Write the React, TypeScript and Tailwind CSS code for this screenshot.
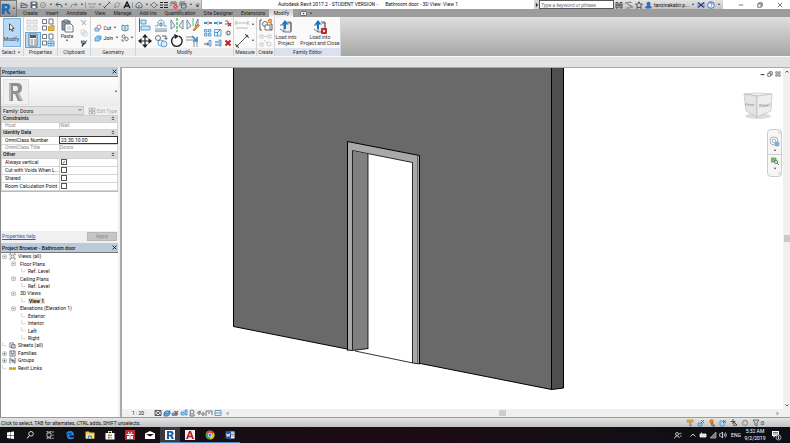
import type { ReactNode } from 'react';
import { useState } from 'react';

interface IconProps {
  children: ReactNode;
  className?: string;
  box?: string;
}

// Every ribbon icon is drawn on a small pixel grid
function Ico({ children, className = 'w-2 h-2', box = '0 0 8 8' }: IconProps) {
  return (
    <svg viewBox={box} className={`block shrink-0 ${className}`} fill="none" stroke="#4b5563" strokeWidth="0.8" aria-hidden="true">
      {children}
    </svg>
  );
}

function Big({ children }: { children: ReactNode }) {
  return <Ico box="0 0 14 14" className="w-[14px] h-[14px]">{children}</Ico>;
}

function Caret() {
  return (
    <svg viewBox="0 0 4 3" className="block w-1 h-[3px] shrink-0" aria-hidden="true">
      <path d="M.7.700h2.600L2 2.300z" fill="#333" />
    </svg>
  );
}

function Tool({ label, children, className = '' }: { label: string; children: ReactNode; className?: string }) {
  return (
    <button type="button" aria-label={label} className={`flex items-center justify-center ${className}`}>
      {children}
    </button>
  );
}

function Group({ title, children, className = '', footer = 'bg-[#ececec]' }: { title: ReactNode; children: ReactNode; className?: string; footer?: string }) {
  return (
    <section className={`flex flex-col shrink-0 border-r border-[#d4d4d4] bg-[#fafafa] overflow-hidden ${className}`}>
      <div className="flex-1 flex items-center justify-center">{children}</div>
      <div className={`h-2 leading-2 text-center whitespace-nowrap text-[#333] ${footer}`}>{title}</div>
    </section>
  );
}

const tabs = ['Create', 'Insert', 'Annotate', 'View', 'Manage', 'Add-Ins', 'Quantification', 'Site Designer', 'Extensions'];

const blue = '#3d8fce';

function QuickAccess() {
  return (
    <div className="w-[185px] shrink-0 flex items-center justify-between pl-[3px] pr-px bg-linear-to-b from-[#dcdcdc] to-[#bdbdbd] border-r border-[#aaa]">
      <Tool label="Open"><Ico><path d="M1 6.500V2h2l1 1h2v1M1 6.500l1-2.500h5.500l-1 2.500z" /></Ico></Tool>
      <Tool label="Save"><Ico><path d="M1 1h5.500l.5.500v5.500H1z" fill="#69727c" /><path d="M2.500 1.500h3v1.500h-3zM2.500 5h3v2h-3z" fill="#fff" stroke="none" /></Ico></Tool>
      <Tool label="Synchronize"><Ico><circle cx="4" cy="4" r="2.600" stroke="#888" /><path d="M2.500 5l3-2" stroke="#888" /></Ico></Tool>
      <Caret />
      <Tool label="Undo"><Ico><path d="M3 1.500L1 3.500l2 2M1 3.500h4q2 0 2 3" strokeWidth="1" /></Ico></Tool>
      <Caret />
      <Tool label="Redo"><Ico><path d="M5 1.500l2 2-2 2M7 3.500H3q-2 0-2 3" stroke="#777" /></Ico></Tool>
      <Caret />
      <span className="w-px h-1.5 bg-[#999]" />
      <Tool label="Measure"><Ico><path d="M1 2v2M7 2v2M1 3h6M1 6h6" stroke="#888" /></Ico></Tool>
      <Caret />
      <Tool label="Aligned dimension"><Ico><path d="M1 7l6-6M.500 5.500L2.500 7.500M5.500.500l2 2" stroke="#333" /></Ico></Tool>
      <Tool label="Tag"><Ico><path d="M2 6V3l2-1.500 3 1L5 6zM1 7l2-2" stroke="#888" /></Ico></Tool>
      <Tool label="Text"><Ico><path d="M1 7.300L4 1l3 6.300M2.300 5h3.500" stroke="#111" strokeWidth="1.300" /></Ico></Tool>
      <span className="w-px h-1.5 bg-[#999]" />
      <Tool label="3D view"><Ico><path d="M1 3.500L4 1l3 2.500v3L4 7 1 6.500zM4 4v3" /></Ico></Tool>
      <Caret />
      <Tool label="Section"><Ico><path d="M4 1l3 3-3 3-3-3zM0 4h1M7 4h1" stroke="#666" /></Ico></Tool>
      <Tool label="Thin lines"><Ico><path d="M0 1.500h3M4 1.500h4M0 4h3M4 4h4M0 6.500h3M4 6.500h4" stroke="#222" strokeWidth="1" /></Ico></Tool>
      <Tool label="Close hidden windows"><Ico><path d="M1 5V1h5v3M2 2.500h3" /><circle cx="5.500" cy="5.500" r="2.200" fill="#d33" stroke="none" /><path d="M4.600 4.600l1.800 1.800M6.400 4.600L4.600 6.400" stroke="#fff" /></Ico></Tool>
      <Tool label="Switch windows"><Ico><path d="M1 5V1h5M2.500 2.500H7V7H2.500zM2.500 4H7" /></Ico></Tool>
      <Caret />
      <Tool label="Customize"><Ico className="w-[5px] h-2"><path d="M1 2.500h6M2 5h4L4 7z" fill="#222" stroke="#222" /></Ico></Tool>
    </div>
  );
}

function TitleBar() {
  return (
    <div className="h-[9px] flex">
      <QuickAccess />
      <h1 className="flex-1 text-center whitespace-pre leading-2">{'Autodesk Revit 2017.2 - STUDENT VERSION -      Bathroom door - 3D View: View 1'}</h1>
      <Tool label="Collapse search" className="w-[5px] bg-[#d5d5d5]"><Ico className="w-1 h-1"><path d="M2 0l4 4-4 4z" fill="#222" /></Ico></Tool>
      <input aria-label="Search" placeholder="Type a keyword or phrase" className="w-[75px] h-[9px] px-px bg-white border border-[#555] italic placeholder:text-[#666] outline-none" />
      <div className="w-[109px] flex items-center justify-between pl-px pr-0.5 bg-linear-to-b from-[#e4e4e4] to-[#c4c4c4]">
        <Tool label="Find"><Ico><path d="M1 4V1.500h2V7H1V4h6v3H5V1.500h2V4" stroke="#333" /></Ico></Tool>
        <Tool label="Subscription"><Ico><path d="M6.500 1.500q-5-1-4 1t3 2-1 2.500l-3 0M1 1v2M7 5v2" /></Ico></Tool>
        <Tool label="Favorites"><Ico><path d="M4 .700l1 2.300 2.500.200-1.900 1.700.6 2.500L4 6.100 1.800 7.400l.6-2.500L.5 3.200 3 3z" stroke="#333" /></Ico></Tool>
        <button type="button" className="flex items-center gap-0.5">
          <Ico className="w-[7px] h-2"><circle cx="4" cy="2.500" r="1.800" fill="#2577d0" stroke="#1c5ca6" /><path d="M1 7.500V6l2-1.500h2L7 6v1.500z" fill="#2577d0" stroke="#1c5ca6" /></Ico>
          <span>tanzinakabir.p...</span>
          <Caret />
        </button>
        <Tool label="Exchange apps"><Ico><path d="M1 1.500l6 5M7 1.500L1 6.500" stroke="#243a7d" strokeWidth="1.300" /><path d="M1 1.500v5M7 1.500v5" stroke="#4f80c4" /></Ico></Tool>
        <Tool label="Help"><Ico><circle cx="4" cy="4" r="3.300" stroke="#245ba9" fill="#fff" /><path d="M2.800 3q0-1.200 1.200-1.200T5.200 3 4 4.500M4 5.300v1" stroke="#245ba9" /></Ico></Tool>
        <Caret />
      </div>
      <div className="w-[67px] flex items-center justify-around pl-2">
        <Tool label="Minimize"><Ico className="w-1.5 h-1.5"><path d="M1 4h6" stroke="#222" /></Ico></Tool>
        <Tool label="Restore"><Ico className="w-1.5 h-1.5"><path d="M1 2.500h4.500V7H1zM2.500 2.500V1H7v4.500H5.500" stroke="#222" /></Ico></Tool>
        <Tool label="Close"><Ico className="w-1.5 h-1.5"><path d="M1 1l6 6M7 1L1 7" stroke="#222" /></Ico></Tool>
      </div>
    </div>
  );
}

function TabBar() {
  return (
    <nav className="h-2 flex items-stretch bg-[#9c9c9c] pl-1.5 gap-2 leading-[9px]">
      {tabs.map((tab) => (
        <button key={tab} type="button" className="whitespace-nowrap text-[#1c1c1c]">{tab}</button>
      ))}
      <button type="button" className="w-6 -ml-1 -mr-px bg-linear-to-b from-[#c8c8c8] to-[#f1f1f1]">Modify</button>
      <button type="button" aria-label="Ribbon display" className="flex items-center gap-0.5">
        <Ico className="w-[7px] h-[5px]" box="0 0 7 5"><rect x=".5" y=".5" width="6" height="4" rx="1" fill="#eee" /><circle cx="3.500" cy="2.500" r=".8" fill="#444" stroke="none" /></Ico>
        <Caret />
      </button>
    </nav>
  );
}

function Ribbon() {
  return (
    <div className="h-[39px] flex bg-linear-to-b from-[#dfdfdf] to-[#a6a6a6]">
      <Group className="w-6" title={<span className="inline-flex items-center gap-0.5">Select <Caret /></span>}>
        <button type="button" className="w-[18px] h-[29px] flex flex-col items-center justify-center gap-1 bg-[#b9d9f4] border border-[#7eb0dc] text-[#333]">
          <Ico className="w-[7px] h-[9px]" box="0 0 7 9"><path d="M1.500.800v6.400L3 5.800l1 2.500 1.200-.5-1-2.400h2z" fill="#fff" stroke="#333" /></Ico>
          Modify
        </button>
      </Group>

      <Group className="w-[34px]" title="Properties">
        <div className="grid grid-cols-2 gap-px">
          <Tool label="Family category"><Big><path d="M1 2h4v4H1zM7 2h4v4H7zM1 8h4v4H1zM7 8h4v4H7z" fill="#eee" stroke="#c6c6c6" /></Big></Tool>
          <Tool label="Type properties"><Big><path d="M1.500 1.500h4v4h-4zM8 1h4v5H8zM1.500 8h4v4h-4z" fill="#fff" /><path d="M7.500 8.500h2l.5-1h3v5h-5.500z" fill="#e9b83c" stroke="#c08b1a" /></Big></Tool>
          <Tool label="Properties" className="bg-[#b9d9f4] outline outline-[#69a4d8]"><Big><path d="M3 1h8v12H3z" fill="#fff" /><path d="M4 2h6v3H4z" fill="#44606f" stroke="none" /><path d="M4.500 7H7M4.500 9H7M4.500 11H7M8 7h2M8 9h2M8 11h2" /></Big></Tool>
          <Tool label="Family types"><Big><path d="M1.500 1.500h4v4h-4zM8 1h4v5H8zM1.500 8h4v4h-4z" fill="#fff" /><path d="M7 8h6v5H7zM10 8v5M7 10.500h6" fill="#d8ecfb" stroke={blue} /></Big></Tool>
        </div>
      </Group>

      <Group className="w-[33px]" title="Clipboard">
        <div className="flex gap-1.5">
          <button type="button" className="flex flex-col items-center text-[#333]">
            <Big><path d="M2 2h8v9H2z" fill="#8b98a3" /><path d="M4 1h4v2H4z" fill="#c9ced3" /><path d="M5 5h6l2 2v6H5z" fill="#fff" /><path d="M7 8h4M7 10h4" stroke="#aaa" /></Big>
            Paste
            <Caret />
          </button>
          <div className="flex flex-col gap-0.5">
            <Tool label="Cut to clipboard"><Ico><path d="M1 1l5 5M6 1L2 6" stroke="#bbb" strokeWidth="1.200" /></Ico></Tool>
            <Tool label="Copy to clipboard"><Ico><path d="M1 1h4v4H1zM3 3h4v4H3z" fill="#fff" stroke="#c8c8c8" /></Ico></Tool>
            <Tool label="Match type"><Ico><path d="M1 2h3l2 1-1 2H2zM7 1L4 5" fill="#9aa4ad" /><path d="M4 4L2 7.500" stroke="#333" strokeWidth="1.500" /></Ico></Tool>
          </div>
        </div>
      </Group>

      <Group className="w-[45px]" title="Geometry">
        <div className="grid grid-cols-[26px_12px] gap-y-0.5 gap-x-px items-center">
          <button type="button" className="flex items-center gap-0.5"><Ico><path d="M1 4h4v3H1z" fill="#bdddf4" stroke={blue} /><circle cx="5" cy="3" r="2" fill="#fff" stroke="#d05c45" /></Ico>Cut <Caret /></button>
          <Tool label="Cope" className="justify-start"><Ico><path d="M1 1l3 1v5L1 6zM4 2l3-1v5L4 7" fill="#d4e9f6" stroke="#4c7895" /></Ico></Tool>
          <button type="button" className="flex items-center gap-0.5"><Ico><path d="M1 4l2-2h4v3L5 7H1z" fill="#9fcff2" stroke={blue} /><path d="M3 4h3v2" stroke={blue} /></Ico>Join <Caret /></button>
          <Tool label="Paint" className="justify-start gap-px"><Ico><circle cx="2.500" cy="2.500" r="1.500" /><circle cx="5.500" cy="5" r="1.700" /><path d="M1 5v2h2" /></Ico><Caret /></Tool>
        </div>
      </Group>

      <Group className="w-[98px]" title="Modify">
        <div className="flex items-center gap-1">
          <div className="grid grid-cols-4 gap-x-0.5 gap-y-0.5">
            <Tool label="Align"><Big><path d="M1.500 0v14" stroke="#333" /><path d="M3 2h5v4H3zM3 8h9v4H3z" fill="#c9e4f8" stroke={blue} /></Big></Tool>
            <Tool label="Offset"><Big><path d="M1 11h12M1 8h3V4q3-4 6 0v4h3" stroke={blue} /><path d="M1 13h12M6 8V5h2v3z" /></Big></Tool>
            <Tool label="Mirror - Pick axis"><Big><path d="M1 2v9l4-3zM13 2v9L9 8z" fill="#e6f2fb" stroke="#5c7182" /><path d="M7 0v14" stroke="#36a453" strokeWidth="1.200" strokeDasharray="3 1" /></Big></Tool>
            <Tool label="Mirror - Draw axis"><Big><path d="M1 2v9l4-3zM12 1v6L9 8z" fill="#e6f2fb" stroke="#5c7182" /><path d="M7 0v8" stroke="#36a453" /><path d="M7 12l5-6 1.500 1.500L8 13z" fill="#e9a738" stroke="#a66a21" /></Big></Tool>
            <Tool label="Move"><Big><path d="M7 1v12M1 7h12" stroke="#222" strokeWidth="1.200" /><path d="M7 0l3 3.500H4zM7 14l3-3.500H4zM0 7l3.500-3v6zM14 7l-3.500-3v6z" fill="#222" stroke="none" /></Big></Tool>
            <Tool label="Copy"><Big><circle cx="4" cy="4" r="2.500" /><circle cx="7" cy="9" r="3" stroke={blue} /><circle cx="10" cy="10" r="3" stroke={blue} fill="#d5eafa" /><path d="M8 2h4v3M10.500 4L12 5.500 13.500 4" stroke="#333" /></Big></Tool>
            <Tool label="Rotate"><Big><path d="M9 2.200A5.300 5.300 0 1 1 4.500 2.300" stroke="#222" strokeWidth="1.400" /><path d="M4 0l5 2-4 3z" fill="#222" stroke="none" /></Big></Tool>
            <Tool label="Trim"><Big><path d="M0 3h8v3H0M8 6v7M11 3v10" stroke="#6b7680" /><path d="M6 2l5 5M11 3v4H7" stroke={blue} strokeWidth="1.500" /></Big></Tool>
          </div>
          <div className="grid grid-cols-3 gap-0.5">
            <Tool label="Split element"><Ico><path d="M0 4h3M5 4h3" stroke={blue} strokeWidth="2" /><path d="M4 2v4" stroke="#d95548" /></Ico></Tool>
            <Tool label="Split with gap"><Ico><path d="M0 4h3M5 4h3" stroke={blue} strokeWidth="2" /><path d="M3.500 2v4M5 2v4" stroke="#aaa" /></Ico></Tool>
            <Tool label="Unpin"><Ico><path d="M1 2h3v3H1" /><path d="M4 4l3 3M7 4L4 7" stroke="#cf2222" strokeWidth="1.300" /></Ico></Tool>
            <Tool label="Array"><Ico><path d="M.500.500h2.500v2.500H.5zM4.500.500H7v2.500H4.500zM.5 4.500H3V7H.5zM4.500 4.500H7V7H4.500z" fill="#cfe7f9" stroke={blue} /></Ico></Tool>
            <Tool label="Scale"><Ico><path d="M.500.500H7V7H.5zM.5 3.500h3V7" fill="#e3f1fb" stroke={blue} /><path d="M3 4l3-3" /></Ico></Tool>
            <Tool label="Pin"><Ico><path d="M1.500 4h1M3 2v4l3-.5v-3z" fill="#eee" /></Ico></Tool>
            <Tool label="Trim single"><Ico><path d="M0 5h4" stroke="#333" /><path d="M5 1.500h2v5.500H5z" fill="#cfe7f9" stroke={blue} /><path d="M3 3.500L4.500 5 3 6.500" stroke="#333" /></Ico></Tool>
            <Tool label="Trim multiple"><Ico><path d="M1 3h3M1 6h3" stroke="#333" /><path d="M5 1h2v6H5z" fill="#afd6f3" stroke={blue} /></Ico></Tool>
            <Tool label="Delete"><Ico><path d="M1.500 1.500l5 5M6.500 1.500l-5 5" stroke="#d11414" strokeWidth="1.800" /></Ico></Tool>
          </div>
        </div>
      </Group>

      <Group className="w-[23px]" title="Measure">
        <div className="flex flex-col gap-0.5">
          <button type="button" aria-label="Dimension" className="flex items-center gap-0.5"><Big><path d="M1 5h12M1 3v4M13 3v4M1 10h12" stroke="#bbb" strokeWidth="1.200" /></Big><Caret /></button>
          <button type="button" aria-label="Measure between" className="flex items-center gap-0.5"><Big><path d="M2 12L12 2M0 10l4 4M10 0l4 4" stroke="#333" /><circle cx="2" cy="12" r="1" fill="#333" /><circle cx="12" cy="2" r="1" fill="#333" /></Big><Caret /></button>
        </div>
      </Group>

      <Group className="w-[18px]" title="Create">
        <div className="flex flex-col gap-0.5">
          <Tool label="Create group"><Big><path d="M3 2H1v10h2M11 6h2v6h-2" stroke="#333" /><circle cx="6" cy="6" r="2.500" /><path d="M6 7h5v5H6z" fill="#fff" /><circle cx="11" cy="3" r="1.500" fill="#fff" stroke="#ee7d20" strokeWidth="1.400" /></Big></Tool>
          <Tool label="Create similar"><Big><path d="M1 1h3v3H1zM9 1h3v3H9zM5 2.500h3M5 6l3 3M1 9h3v3H1z" stroke="#bbb" /><circle cx="10" cy="10" r="2" stroke="#bbb" /></Big></Tool>
        </div>
      </Group>

      <Group className="w-[66px]" title="Family Editor" footer="bg-[#dce1f0]">
        <div className="flex items-start gap-1 text-[#333]">
          <button type="button" className="flex flex-col items-center whitespace-nowrap">
            <Big><path d="M1 5h4v7h7V2H8M5 12L1 9" fill="#eee" /><path d="M9 3h3v8" /><path d="M6 9V3" stroke="#1873c6" strokeWidth="2" /><path d="M2.500 4.500L6 0l3.500 4.500z" fill="#1873c6" stroke="none" /></Big>
            <span>Load into<br />Project</span>
          </button>
          <button type="button" className="flex flex-col items-center whitespace-nowrap">
            <Big><path d="M1 5h4v7h7V2H8M5 12L1 9" fill="#eee" /><path d="M9 3h3v5" /><path d="M5 9V3" stroke="#1873c6" strokeWidth="2" /><path d="M1.500 4.500L5 0l3.500 4.500z" fill="#1873c6" stroke="none" /><path d="M8.500 8.500h5v5h-5z" fill="#d62a2a" stroke="#a31919" /><path d="M10 10l2 2M12 10l-2 2" stroke="#fff" /></Big>
            <span>Load into<br />Project and Close</span>
          </button>
        </div>
      </Group>
    </div>
  );
}

function PanelHeader({ title }: { title: string }) {
  return (
    <header className="h-[9px] shrink-0 flex items-center justify-between px-px bg-[#bccbda]">
      <h2 className="font-medium">{title}</h2>
      <Tool label={`Close ${title}`} className="w-1.5"><Ico className="w-[5px] h-[5px]"><path d="M1 1l6 6M7 1L1 7" stroke="#111" strokeWidth="1.400" /></Ico></Tool>
    </header>
  );
}

function SectionRow({ title }: { title: string }) {
  return (
    <tr className="bg-[#dcdcdc]">
      <th colSpan={2} className="p-0 pl-px border border-[#d0d0d0] text-left font-medium">
        <span className="flex items-center justify-between pr-0.5">
          {title}
          <Ico className="w-1 h-[5px]" box="0 0 4 6"><path d="M.5 2.500L2 1l1.500 1.500M.5 5L2 3.500 3.500 5" stroke="#111" /></Ico>
        </span>
      </th>
    </tr>
  );
}

const cell = 'p-0 border border-[#d4d4d4] whitespace-nowrap text-left font-normal';

const toggles = [
  { id: 'vertical', label: 'Always vertical' },
  { id: 'voids', label: 'Cut with Voids When L...' },
  { id: 'shared', label: 'Shared' },
  { id: 'room', label: 'Room Calculation Point' },
];

function PropertiesPanel() {
  const [checked, setChecked] = useState<Record<string, boolean>>({ vertical: true });

  return (
    <section className="h-[174px] shrink-0 flex flex-col bg-white">
      <PanelHeader title="Properties" />
      <div className="h-[30px] shrink-0 flex items-center justify-between pl-0.5 border-t border-[#777] bg-linear-to-b from-[#fff] to-[#ebebeb]">
        <div className="w-[26px] h-[26px] bg-[#f0f0f0] border border-[#e2e2e2] flex items-center justify-center">
          <svg viewBox="0 0 18 20" className="w-[18px] h-5" aria-hidden="true">
            <path fillRule="evenodd" d="M2 1h8q5 0 5 5 0 4-3 5l4 8h-5l-3-7H6v7H2zM6 4v5h3q2 0 2-2.500T9 4z" fill="#8f8f8f" />
            <path d="M2 1l2 1v16l-2 1zM12 11l4 8-3-1-3-7z" fill="#bbb" />
          </svg>
        </div>
        <Tool label="Type selector" className="w-1"><Caret /></Tool>
      </div>
      <div className="h-[9px] shrink-0 flex items-center gap-1 pr-px bg-[#f0f0f0]">
        <div className="flex-1 relative h-[9px]">
          <select aria-label="Family" className="w-full h-[9px] pl-px appearance-none bg-[#e1e1e1] border border-[#c8c8c8] block">
            <option>Family: Doors</option>
          </select>
          <Ico className="absolute right-0.5 top-0.5 w-1 h-1"><path d="M1 2l3 3 3-3" stroke="#333" strokeWidth="1.400" /></Ico>
        </div>
        <button type="button" disabled className="flex items-center gap-px text-[#aaa] whitespace-nowrap">
          <Ico><path d="M1 1h2.500v2.500H1zM4.500 1H7v2.500H4.500zM1 4.500h2.500V7H1zM4.500 4.500H7V7H4.500z" stroke="#aaa" /></Ico>
          Edit Type
        </button>
      </div>
      <table className="w-full h-[76px] table-fixed border-collapse leading-[5px]">
        <tbody>
          <SectionRow title="Constraints" />
          <tr className="text-[#888]">
            <th className={`${cell} w-1/2 pl-[3px]`}>Host</th>
            <td className={`${cell} w-1/2`}>Wall</td>
          </tr>
          <SectionRow title="Identity Data" />
          <tr>
            <th className={`${cell} pl-[3px]`}><label htmlFor="omni">OmniClass Number</label></th>
            <td className={cell}><input id="omni" defaultValue="23.30.10.00" className="block w-full h-1.5 pl-px outline outline-[#333] bg-white" /></td>
          </tr>
          <tr className="text-[#888]">
            <th className={`${cell} pl-[3px]`}>OmniClass Title</th>
            <td className={cell}>Doors</td>
          </tr>
          <SectionRow title="Other" />
          {toggles.map((t) => (
            <tr key={t.id}>
              <th className={`${cell} pl-[3px]`}><label htmlFor={t.id}>{t.label}</label></th>
              <td className={cell}>
                <input
                  id={t.id}
                  type="checkbox"
                  checked={!!checked[t.id]}
                  onChange={(e) => setChecked({ ...checked, [t.id]: e.target.checked })}
                  className="block ml-px w-1.5 h-1.5 appearance-none border border-[#555] bg-white checked:before:content-['✓'] before:block before:leading-1 before:text-center"
                />
              </td>
            </tr>
          ))}
        </tbody>
      </table>
      <div className="flex-1 border-t border-[#bbb]" />
      <footer className="h-2.5 shrink-0 flex items-center justify-between pl-px pr-px bg-[#f0f0f0]">
        <a href="#help" className="text-[#1769c4] underline">Properties help</a>
        <button type="button" disabled className="w-[30px] h-[9px] bg-[#c6c6c6] border border-[#b8b8b8] text-[#888] leading-[7px]">Apply</button>
      </footer>
    </section>
  );
}

interface TreeRow {
  label: string;
  depth: number;
  toggle?: '-' | '+';
  icon?: 'views' | 'sheets' | 'families' | 'groups' | 'links';
  bold?: boolean;
}

const tree: TreeRow[] = [
  { label: 'Views (all)', depth: 0, toggle: '-', icon: 'views' },
  { label: 'Floor Plans', depth: 1, toggle: '-' },
  { label: 'Ref. Level', depth: 2 },
  { label: 'Ceiling Plans', depth: 1, toggle: '-' },
  { label: 'Ref. Level', depth: 2 },
  { label: '3D Views', depth: 1, toggle: '-' },
  { label: 'View 1', depth: 2, bold: true },
  { label: 'Elevations (Elevation 1)', depth: 1, toggle: '-' },
  { label: 'Exterior', depth: 2 },
  { label: 'Interior', depth: 2 },
  { label: 'Left', depth: 2 },
  { label: 'Right', depth: 2 },
  { label: 'Sheets (all)', depth: 0, icon: 'sheets' },
  { label: 'Families', depth: 0, toggle: '+', icon: 'families' },
  { label: 'Groups', depth: 0, toggle: '+', icon: 'groups' },
  { label: 'Revit Links', depth: 0, icon: 'links' },
];

const treeIcons = {
  views: <><circle cx="4" cy="4" r="1.800" /><path d="M1 2.500V1h1.500M5.500 1H7v1.500M7 5.500V7H5.500M2.500 7H1V5.500" /></>,
  sheets: <><path d="M1 1h4v5H1z" fill="#fff" /><path d="M3 3h4v4H3z" fill="#ccd6de" /></>,
  families: <><path d="M1 1h6v6H1z" fill="#fff" /><path d="M2.500 1v3h3V1M2.500 5.500h3" /></>,
  groups: <><path d="M2 1H1v6h1M6 1h1v6H6" /><circle cx="3.500" cy="3.500" r="1.300" /><path d="M4 4h2v2H4z" /></>,
  links: <path d="M0 3h3.500v2H0zM4.500 3H8v2H4.500zM2 4h4" fill="#e7ac2d" stroke="#d1941d" />,
};

const indents = ['pl-px gap-0.5', 'pl-2.5 gap-1', 'pl-5 gap-0.5'];

function Toggle({ kind }: { kind?: '-' | '+' }) {
  return (
    <Ico className="w-[5px] h-full" box="0 0 5 8">
      {kind ? (
        <>
          <rect x=".5" y="2" width="4" height="4" rx=".5" fill="#fff" stroke="#aaa" />
          <path d={kind === '-' ? 'M1.500 4h2' : 'M1.500 4h2M2.500 3v2'} stroke="#456" />
        </>
      ) : (
        <path d="M.5 0v4H5" stroke="#bbb" strokeWidth="0.600" />
      )}
    </Ico>
  );
}

function ProjectBrowser() {
  return (
    <section className="flex-1 flex flex-col min-h-0 bg-white border-t-2 border-[#f0f0f0]">
      <PanelHeader title="Project Browser - Bathroom door" />
      <ul className="h-[120px] grid auto-rows-fr border-t border-[#777] leading-[7px]">
        {tree.map((row, i) => (
          <li key={i} className={`flex items-center ${indents[row.depth]}`}>
            <Toggle kind={row.toggle} />
            {row.icon && <Ico className="w-[7px] h-[7px]">{treeIcons[row.icon]}</Ico>}
            <button type="button" className={row.bold ? 'font-bold bg-[#e5e5e5] leading-[6px] px-px' : ''}>{row.label}</button>
          </li>
        ))}
      </ul>
    </section>
  );
}

function ViewCube() {
  return (
    <svg viewBox="0 0 34 30" className="absolute right-2 top-[23px] w-[34px] h-[30px]" aria-label="View cube">
      <ellipse cx="17" cy="25" rx="13" ry="3" fill="#ddd" />
      <path d="M3 3l13-1 15 1-14 2z" fill="#f4f4f4" stroke="#aaa" strokeWidth=".5" />
      <path d="M3 3l13 2v21L5 20z" fill="#e4e4e4" stroke="#aaa" strokeWidth=".5" />
      <path d="M16 5l15-2-1 17-14 6z" fill="#eee" stroke="#aaa" strokeWidth=".5" />
      <text x="4" y="15" fontSize="3" fill="#777" transform="rotate(4 9 13)">FRONT</text>
      <text x="18" y="16" fontSize="4" fill="#777" transform="rotate(-4 23 13)">RIGHT</text>
    </svg>
  );
}

function NavigationBar() {
  return (
    <div className="absolute right-px top-[61px] w-[15px] h-12 flex flex-col items-center justify-between py-px rounded-sm border border-[#ccc] bg-[#f6f6f6]">
      <Ico className="w-[3px] h-[3px] self-end"><circle cx="4" cy="4" r="3" stroke="#999" /></Ico>
      <Tool label="Steering wheel"><Ico className="w-[11px] h-[11px]" box="0 0 11 11"><circle cx="5" cy="5" r="4" stroke="#999" fill="#fff" /><circle cx="5" cy="5" r="1.800" stroke="#999" /><circle cx="8" cy="8" r="2.500" fill="#78aee0" stroke="none" /></Ico></Tool>
      <Caret />
      <hr className="w-full border-[#ccc]" />
      <Tool label="Zoom region"><Ico><path d="M0 1h5v4H0z" fill="#7dba68" stroke="#5da34b" /><circle cx="5" cy="5" r="1.500" fill="#fff" /><path d="M6 6l2 2" /></Ico></Tool>
      <Caret />
      <Ico className="w-[3px] h-[3px] self-end"><circle cx="4" cy="4" r="3" stroke="#999" /></Ico>
    </div>
  );
}

function Model() {
  return (
    <svg viewBox="122 68 661 341" preserveAspectRatio="xMidYMin slice" className="block w-full h-full" aria-label="Door in wall">
      <g stroke="#000" strokeWidth="1" strokeLinejoin="round">
        <path d="M233.500 66v260.500L551.500 389.500V66z" fill="#696969" />
        <path d="M551.500 66v323.500l12-1.500V66z" fill="#4e4e4e" />
      </g>
      {/* casing, opening, then the jamb seen through it */}
      <path d="M347.500 141.500l72 14v208.500l-5-.500-61-12-6-1z" fill="#a9a9a9" />
      <path d="M352.500 150.500l60 12v201l-60-12z" fill="#fff" />
      <path d="M352.500 151l15.500 3v195l-15.500 1.500z" fill="#808080" />
      <path d="M348 350.500l65 12.500v3l-65-13z" fill="#fff" />
      <g fill="none" stroke="#000" strokeWidth="1">
        <path d="M347.500 350.500v-209l72 14v208.500" />
        <path d="M352.500 350v-199.500l60 12v200.500M368 154v195" strokeWidth=".8" />
        <path d="M347.500 350l5 .5 15.500-2M355 351l58 12 6.500 1" strokeWidth=".8" />
        <path d="M417.500 156v207" stroke="#555" strokeWidth=".8" />
      </g>
    </svg>
  );
}

function ViewControls() {
  return (
    <div className="h-2 shrink-0 flex items-center bg-[#f0f0f0]">
      <span className="pl-2.5 w-8">1 : 20</span>
      <div className="w-[68px] flex items-center justify-between">
        <Tool label="Detail level"><Ico><path d="M1 1.500h6v5H1zM1 1.500l6 5M7 1.500l-6 5" stroke="#333" /></Ico></Tool>
        <Tool label="Visual style"><Ico><path d="M1 4l2-2h4v3L5 7H1zM1 4h4l2-2" fill="#62a6df" stroke="#286a9e" /></Ico></Tool>
        <Tool label="Sun path"><Ico><path d="M1 4h5v2.500H1z" fill="#62a6df" stroke={blue} /><path d="M3.500 2l3.500 3.500M7 2L3.500 5.500" stroke="#d23c2e" strokeWidth="1.200" /></Ico></Tool>
        <Tool label="Shadows"><Ico><path d="M1 3h3v3H1zM5 1h2v5H5z" fill="#a5cff0" stroke={blue} /></Ico></Tool>
        <Tool label="Crop view"><Ico><circle cx="4" cy="3" r="2" /><path d="M2 5v2h4V5" /></Ico></Tool>
        <Tool label="Hide"><Ico><circle cx="2" cy="4" r="1.300" /><circle cx="6" cy="5" r="1.300" /><path d="M2 3l2-1" /></Ico></Tool>
        <Tool label="Reveal"><Ico><path d="M1 7V2h6v4M3 4h2" /></Ico></Tool>
        <Tool label="Constraints"><Ico><path d="M1 1.500h6v5H1zM1 4h6" stroke="#4f88b3" /></Ico></Tool>
      </div>
      <div className="flex-1 flex items-center justify-between px-1">
        <Tool label="Scroll left"><Ico className="w-1 h-[5px]"><path d="M5 1L2 4l3 3" stroke="#222" strokeWidth="1.300" /></Ico></Tool>
        <div className="w-[7px] h-1.5 bg-[#cdcdcd]" />
        <Tool label="Scroll right"><Ico className="w-1 h-[5px]"><path d="M3 1l3 3-3 3" stroke="#222" strokeWidth="1.300" /></Ico></Tool>
      </div>
      <div className="w-[7px]" />
    </div>
  );
}

function DrawingArea() {
  return (
    <main className="flex-1 min-w-0 flex flex-col border-l-2 border-t border-[#aaa] bg-white">
      <div className="flex-1 min-h-0 flex">
        <div className="flex-1 min-w-0 relative overflow-hidden">
          <Model />
          <div className="absolute right-0.5 top-[3px] flex gap-0.5">
            <Tool label="Minimize view"><Ico className="w-[5px] h-1.5"><path d="M1 5h6" stroke="#222" strokeWidth="1.500" /></Ico></Tool>
            <Tool label="Restore view"><Ico className="w-1.5 h-1.5"><path d="M1 3h4v4H1zM3 3V1h4v4H5" stroke="#222" /></Ico></Tool>
            <Tool label="Close view"><Ico className="w-1.5 h-1.5"><path d="M1 1h2v2l2 0V1h2v2L5.500 4 7 5v2H5V5H3v2H1V5l1.500-1L1 3z" stroke="#444" /></Ico></Tool>
          </div>
          <ViewCube />
          <NavigationBar />
        </div>
        <div className="w-[7px] shrink-0 flex flex-col items-center justify-between py-0.5 bg-[#f0f0f0]">
          <Tool label="Scroll up"><Ico className="w-1 h-1"><path d="M1 5l3-3 3 3" stroke="#222" strokeWidth="1.500" /></Ico></Tool>
          <div className="w-1.5 h-[7px] bg-[#c9c9c9]" />
          <Tool label="Scroll down"><Ico className="w-1 h-1"><path d="M1 3l3 3 3-3" stroke="#222" strokeWidth="1.500" /></Ico></Tool>
        </div>
      </div>
      <ViewControls />
    </main>
  );
}

function StatusBar() {
  return (
    <footer className="h-2.5 shrink-0 flex items-center justify-between border-t border-[#9a9a9a] bg-linear-to-b from-[#e6e6e6] to-[#c2c2c2] pl-px pr-[26px]">
      <span>Click to select, TAB for alternates, CTRL adds, SHIFT unselects.</span>
      <div className="flex items-center gap-[3px]">
        <Tool label="Select links"><Ico><path d="M1 1h6v2H1z" fill="#eab52e" stroke="#c48c17" /><path d="M4 3v4l2-1" /></Ico></Tool>
        <Tool label="Select underlay"><Ico><path d="M1 4h4v3H1z" fill="#8fc1e9" stroke={blue} /><path d="M4 1l3 3M7 1L4 4" stroke="#d22" /></Ico></Tool>
        <Tool label="Select pinned"><Ico><path d="M2 1h3v3H2zM3.500 4v2" fill="#e68a34" stroke="#c66a20" /><path d="M4 4v3l3 0z" /></Ico></Tool>
        <Tool label="Select by face"><Ico><path d="M1 2h4v5H1z" fill="#b8d8f2" stroke={blue} /><path d="M4 1l3 3M7 1L4 4" stroke="#d22" /></Ico></Tool>
        <Tool label="Drag elements"><Ico><path d="M3 0v5M.500 2.500h5" stroke="#333" /><path d="M4 3v4l1-1 2 0z" fill="#fff" stroke="#333" /></Ico></Tool>
        <Tool label="Background processes"><Ico><circle cx="4" cy="4" r="2.500" stroke="#999" strokeWidth="1.300" /></Ico></Tool>
        <button type="button" className="flex items-center"><Ico><path d="M1 1h6L5 4v3L3 6V4z" fill="#c6d3dc" /></Ico>:0</button>
      </div>
    </footer>
  );
}

function AppIcon({ name, children, active, open }: { name: string; children: ReactNode; active?: boolean; open?: boolean }) {
  return (
    <button type="button" aria-label={name} className={`w-5 flex items-center justify-center border-b ${active ? 'bg-[#3b3b3f]' : ''} ${active || open ? 'border-[#5585b3]' : 'border-transparent'}`}>
      <svg viewBox="0 0 10 10" className="block w-2.5 h-2.5" aria-hidden="true">{children}</svg>
    </button>
  );
}

function Taskbar() {
  return (
    <footer className="h-4 shrink-0 flex items-stretch justify-between bg-linear-to-r from-[#101014] via-[#1c0b14] to-[#0b1016] text-white">
      <div className="flex">
        <AppIcon name="Start"><path d="M2 2.400l3-.4v3H2zM5.400 2L9 1.500V5H5.400zM2 5.400h3v3L2 8zM5.400 5.400H9V9l-3.600-.5z" fill="#fff" /></AppIcon>
        <AppIcon name="Search"><path d="M4.500 5.500L2 8.500" stroke="#fff" /><circle cx="6" cy="3.800" r="2.300" fill="none" stroke="#fff" strokeWidth=".8" /></AppIcon>
        <AppIcon name="Task view"><path d="M2 3h4v4H2zM2 1v1h4V1M2 9V8h4v1M8 1v2M8 4.500v1.500M8 7.500V9" fill="none" stroke="#ddd" strokeWidth=".8" /></AppIcon>
        <AppIcon name="Edge"><path d="M1 5q0-4 4.200-4Q9 1 9 5.500H4q.2 2 2.200 2 1.300 0 2.500-.700v1.800q-1 .7-3 .7Q2 9.300 2 6q0-2 2-3-2 0-3 2zM4 4.200h2.500Q6.500 3 5.300 3T4 4.200z" fill="#2486e8" fillRule="evenodd" /></AppIcon>
        <AppIcon name="File explorer"><path d="M.500 1.500h3.500l.8 1H9.500v6h-9z" fill="#f3c64b" /><path d="M1 4h8v4.500H1z" fill="#fbe08b" /><path d="M3 5.500h4V9H6V7H4v2H3z" fill="#3b98d8" /></AppIcon>
        <AppIcon name="Store"><path d="M.5 3h9v6.500h-9zM3 3V1h4v2H6.300V1.700H3.700V3z" fill="#fff" /><path d="M3 4.500h1.800v1.800H3z" fill="#f25022" /><path d="M5.200 4.500H7v1.800H5.200z" fill="#7fba00" /><path d="M3 6.700h1.800v1.800H3z" fill="#00a4ef" /><path d="M5.200 6.700H7v1.800H5.200z" fill="#ffb900" /></AppIcon>
        <AppIcon name="Gifts"><path d="M0 0h10v10H0z" fill="#c9252c" /><path d="M1.500 4h7v1h-7zM2 6h2v3H2zM6 6h2v3H6zM4.300 4h1.400v5H4.300zM3 1.500l2 2 2-2v2H3z" fill="#fff" /></AppIcon>
        <AppIcon name="Mail"><path d="M0 3.500L5 1l5 2.500V9H0z" fill="#fff" /><path d="M1 4h8L5 6.500z" fill="#16161a" /></AppIcon>
        <AppIcon name="Revit" active><path d="M0 0h10v10H0z" fill="#f3f6f9" /><path fillRule="evenodd" d="M2 1h4q2.500 0 2.500 2.500Q8.500 5 7.200 5.700L9 9H6.800L5.300 6.200H4V9H2zM4 2.700v2h1.500q1 0 1-1t-1-1z" fill="#175ca3" /></AppIcon>
        <AppIcon name="AutoCAD" open><path d="M0 0h10v10H0z" fill="#f5eeee" /><path fillRule="evenodd" d="M1 9l3-8h2l3 8H7l-.5-1.700h-3L3 9zM4 5.700h2L5 3z" fill="#b3202c" /></AppIcon>
        <AppIcon name="Chrome" open><circle cx="5" cy="5" r="4.500" fill="#35a852" /><path d="M5 5L1.100 2.700A4.500 4.500 0 0 1 9 3z" fill="#e94336" /><path d="M5 5l4-2a4.500 4.500 0 0 1-4 6.500z" fill="#fbbc05" /><circle cx="5" cy="5" r="2.200" fill="#fff" /><circle cx="5" cy="5" r="1.700" fill="#4285f4" /></AppIcon>
        <AppIcon name="Word" open><path d="M5 1.500h4.500v7H5z" fill="#fff" /><path d="M6 3h3M6 4.500h3M6 6h3" stroke="#2b579a" strokeWidth=".6" /><path d="M.500 1.500L6 .500v9L.500 8.500z" fill="#2b579a" /><path d="M1.500 3.500l.8 3 .8-2.500.8 2.500.8-3" fill="none" stroke="#fff" strokeWidth=".8" /></AppIcon>
      </div>
      <div className="flex items-center pr-1">
        <Tool label="People" className="w-5"><Ico><circle cx="3" cy="3" r="1.500" stroke="#ddd" /><path d="M.500 7.500Q1 5 3 5t2.500 2M5 3q2-2 2.500 0M6 5l1.500 0" stroke="#ddd" /></Ico></Tool>
        <Tool label="Hidden icons" className="w-2.5"><Ico><path d="M1.500 5.500L4 3l2.500 2.500" stroke="#fff" /></Ico></Tool>
        <Tool label="Battery" className="w-2.5"><Ico><path d="M1 3h6v3H1z" fill="#ddd" stroke="#fff" /><path d="M2.500 1.500v1.500" stroke="#fff" /></Ico></Tool>
        <Tool label="Network" className="w-2.5"><Ico><path d="M1 7l6-6v6z" fill="#777" stroke="#aaa" /></Ico></Tool>
        <Tool label="Volume" className="w-2.5"><Ico><path d="M0 3h1.500l2-2v6l-2-2H0zM5 2.500q1 1.500 0 3M6.500 1.500q1.500 2.500 0 5" stroke="#eee" /></Ico></Tool>
        <span className="w-4 text-center">ENG</span>
        <time className="w-[22px] text-center leading-[7px] whitespace-nowrap">5:32 AM<br />9/2/2019</time>
        <Tool label="Notifications" className="w-5"><Ico className="w-[11px] h-[11px]" box="0 0 11 11"><path d="M1 1h7v5H4L2.500 8V6H1z" fill="#fff" stroke="none" /><path d="M2 2.500h5M2 4h5" stroke="#222" strokeWidth=".6" /><circle cx="7.500" cy="7.500" r="2.500" fill="#222" stroke="#bbb" /><path d="M7.500 6v3" stroke="#fff" /></Ico></Tool>
      </div>
    </footer>
  );
}

export default function App() {
  return (
    <div className="h-screen flex flex-col overflow-hidden bg-[#f0f0f0] font-[Roboto,'Open_Sans',sans-serif] text-[5px] leading-[6px] text-[#111]">
      <div className="shrink-0 flex bg-white">
        <button type="button" aria-label="Application menu" className="w-[17px] flex items-center justify-center gap-px border border-[#777] bg-linear-to-b from-[#c9c9c9] to-[#929292]">
          <Ico className="w-[10px] h-3" box="0 0 10 12"><path fillRule="evenodd" d="M1 1h5q3 0 3 3 0 2-2 3l2.500 4H7L5 7.500H3.500V11H1zM3.500 3v2.500h2q1 0 1-1.200T5.500 3z" fill="#1c6fb8" stroke="#145591" strokeWidth=".3" /></Ico>
          <Caret />
        </button>
        <div className="flex-1 min-w-0">
          <TitleBar />
          <TabBar />
        </div>
      </div>
      <Ribbon />
      <div className="h-[11px] shrink-0 border-t border-[#f8f8f8] bg-[#dfe1e3]" />
      <div className="flex-1 min-h-0 flex">
        <aside className="w-[118px] shrink-0 flex flex-col border-l border-[#888] mr-0.5">
          <PropertiesPanel />
          <ProjectBrowser />
        </aside>
        <DrawingArea />
      </div>
      <StatusBar />
      <Taskbar />
    </div>
  );
}
